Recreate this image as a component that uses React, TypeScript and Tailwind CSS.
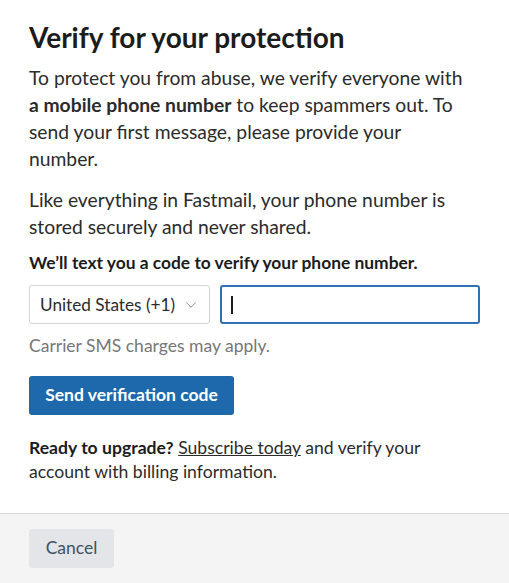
import { ChevronDown } from "lucide-react";

export default function App() {
  return (
    <div
      className="w-[509px] h-[583px] bg-white flex flex-col text-[#2b2b2b]"
      style={{ fontFamily: "Lato, 'Open Sans', sans-serif" }}
    >
      <div className="flex-1 px-[29px] pt-[20px]">
        <h1 className="text-[28px] font-bold leading-[34px] text-[#1c1c1c]">
          Verify for your protection
        </h1>
        <p className="mt-[10px] w-[440px] text-[19.3px] leading-[27px]">
          To protect you from abuse, we verify everyone with{" "}
          <strong className="font-bold">a mobile phone number</strong> to keep spammers out. To send
          your first message, please provide your number.
        </p>
        <p className="mt-[14px] w-[440px] text-[19.3px] leading-[27px]">
          Like everything in Fastmail, your phone number is stored securely and never shared.
        </p>
        <div className="mt-[11px] text-[17.4px] font-bold leading-[24px] text-[#1c1c1c]">
          We’ll text you a code to verify your phone number.
        </div>
        <div className="mt-[10px] flex gap-[10px]">
          <div className="w-[182px] h-[39px] border border-[#d4d4d4] rounded-[3px] flex items-center justify-between pl-[10px] pr-[9px] text-[17.2px]">
            <span>United States (+1)</span>
            <ChevronDown className="w-[18px] h-[18px] text-[#8a8a8a]" strokeWidth={1.25} />
          </div>
          <div className="w-[261px] h-[39px] border-2 border-[#2f71b5] rounded-[3px] flex items-center pl-[9px]">
            <div className="w-[2px] h-[18px] bg-[#1c1c1c]" />
          </div>
        </div>
        <div className="mt-[10px] text-[17.5px] leading-[24px] text-[#777]">
          Carrier SMS charges may apply.
        </div>
        <button className="mt-[18px] h-[39px] w-[205px] rounded-[3px] bg-[#1d69ac] text-white text-[17.5px] font-bold">
          Send verification code
        </button>
        <p className="mt-[21px] text-[17.6px] leading-[24px] w-[420px]">
          <strong className="font-bold text-[#1c1c1c]">Ready to upgrade?</strong>{" "}
          <span className="underline">Subscribe today</span> and verify your account with billing
          information.
        </p>
      </div>
      <div className="h-[70px] border-t border-[#d6d6d6] bg-[#f4f4f4] px-[29px] pt-[15px]">
        <button className="h-[39px] w-[85px] rounded-[3px] bg-[#e3e5e8] text-[#3e5166] text-[17.5px]">
          Cancel
        </button>
      </div>
    </div>
  );
}
